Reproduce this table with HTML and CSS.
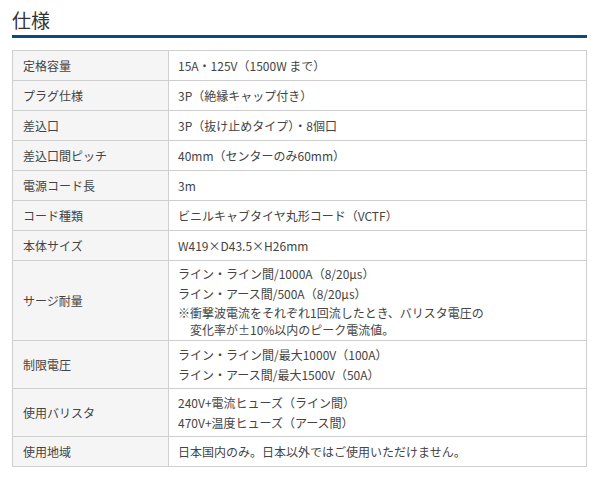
FILE: index.html
```html
<!DOCTYPE html>
<html lang="ja">
<head>
<meta charset="utf-8">
<link rel="stylesheet" href="styles.css">
</head>
<body>
<div class="spec">
  <h2 class="spec-title">仕様</h2>
  <table class="spec-table">
    <tr><th>定格容量</th><td>15A・125V（1500W まで）</td></tr>
    <tr><th>プラグ仕様</th><td>3P（絶縁キャップ付き）</td></tr>
    <tr><th>差込口</th><td>3P（抜け止めタイプ）・8個口</td></tr>
    <tr><th>差込口間ピッチ</th><td>40mm（センターのみ60mm）</td></tr>
    <tr><th>電源コード長</th><td>3m</td></tr>
    <tr><th>コード種類</th><td>ビニルキャブタイヤ丸形コード（VCTF）</td></tr>
    <tr><th>本体サイズ</th><td>W419×D43.5×H26mm</td></tr>
    <tr><th>サージ耐量</th><td class="multi surge">
      <div class="line">ライン・ライン間/1000A（8/20μs）</div>
      <div class="line">ライン・アース間/500A（8/20μs）</div>
      <div class="note">※衝撃波電流をそれぞれ1回流したとき、バリスタ電圧の</div>
      <div class="note indent">変化率が±10%以内のピーク電流値。</div>
    </td></tr>
    <tr><th>制限電圧</th><td class="multi">
      <div class="line">ライン・ライン間/最大1000V（100A）</div>
      <div class="line">ライン・アース間/最大1500V（50A）</div>
    </td></tr>
    <tr><th>使用バリスタ</th><td class="multi">
      <div class="line">240V+電流ヒューズ（ライン間）</div>
      <div class="line">470V+温度ヒューズ（アース間）</div>
    </td></tr>
    <tr><th>使用地域</th><td>日本国内のみ。日本以外ではご使用いただけません。</td></tr>
  </table>
</div>
</body>
</html>
```
FILE: styles.css
```css
html, body {
  margin: 0;
  padding: 0;
  background: #fff;
}
body {
  font-family: "Noto Sans CJK JP", "Noto Sans", sans-serif;
  color: #333;
}
.spec {
  width: 575px;
  margin: 0 0 0 12px;
  padding-top: 6px;
}
.spec-title {
  margin: 0;
  font-size: 19px;
  font-weight: normal;
  line-height: 28px;
  padding-bottom: 1px;
  border-bottom: 3px solid #0d4a7c;
  color: #333;
}
.spec-table {
  margin-top: 12px;
  width: 575px;
  border-collapse: collapse;
  font-size: 12px;
  color: #444;
}
.spec-table th,
.spec-table td {
  border: 1px solid #cfcfcf;
  padding: 4px 9px;
  line-height: 21px;
  text-align: left;
  vertical-align: middle;
  font-weight: normal;
}
.spec-table th {
  width: 136px;
  background: #f5f5f5;
  padding-left: 10px;
}
.spec-table td.multi {
  padding-top: 4px;
  padding-bottom: 3px;
}
.spec-table td.surge {
  padding-top: 3px;
  padding-bottom: 2px;
}
.spec-table .line {
  line-height: 20px;
}
.spec-table .note {
  line-height: 17px;
}
.spec-table .note.indent {
  padding-left: 1em;
}
```
